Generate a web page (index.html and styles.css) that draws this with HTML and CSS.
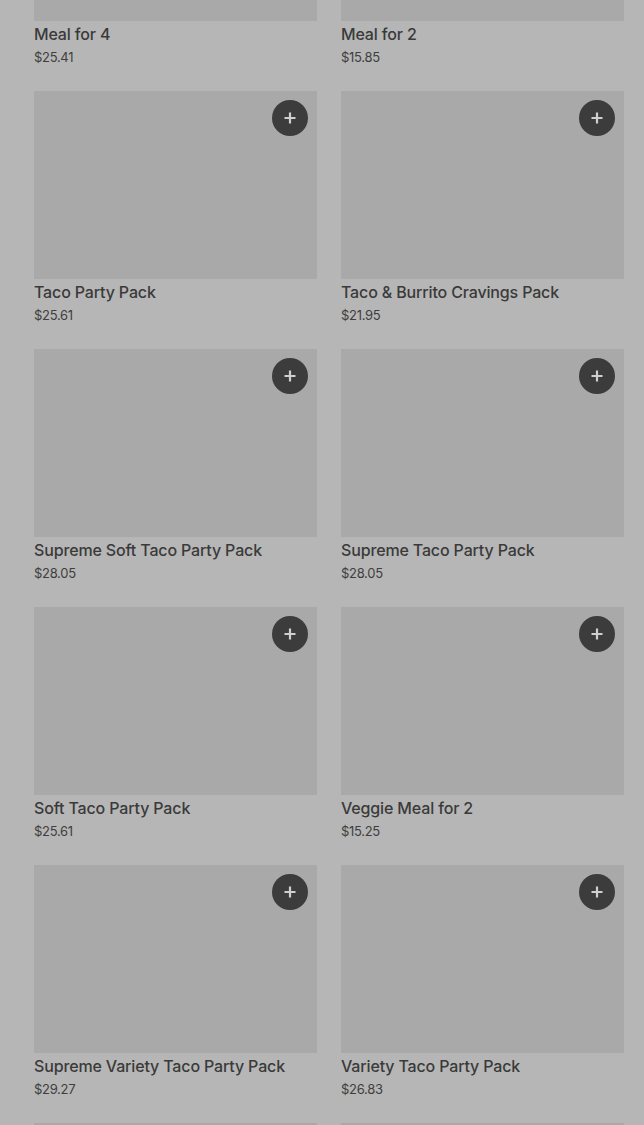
FILE: index.html
```html
<!DOCTYPE html>
<html>
<head>
<meta charset="utf-8">
<link rel="stylesheet" href="styles.css">
</head>
<body>
<main class="grid">
  <div class="card"><div class="img"><button class="add"><svg viewBox="0 0 14 14"><path d="M7 1.5v11M1.5 7h11"/></svg></button></div><div class="title">Meal for 4</div><div class="price">$25.41</div></div>
  <div class="card"><div class="img"><button class="add"><svg viewBox="0 0 14 14"><path d="M7 1.5v11M1.5 7h11"/></svg></button></div><div class="title">Meal for 2</div><div class="price">$15.85</div></div>
  <div class="card"><div class="img"><button class="add"><svg viewBox="0 0 14 14"><path d="M7 1.5v11M1.5 7h11"/></svg></button></div><div class="title">Taco Party Pack</div><div class="price">$25.61</div></div>
  <div class="card"><div class="img"><button class="add"><svg viewBox="0 0 14 14"><path d="M7 1.5v11M1.5 7h11"/></svg></button></div><div class="title">Taco &amp; Burrito Cravings Pack</div><div class="price">$21.95</div></div>
  <div class="card"><div class="img"><button class="add"><svg viewBox="0 0 14 14"><path d="M7 1.5v11M1.5 7h11"/></svg></button></div><div class="title">Supreme Soft Taco Party Pack</div><div class="price">$28.05</div></div>
  <div class="card"><div class="img"><button class="add"><svg viewBox="0 0 14 14"><path d="M7 1.5v11M1.5 7h11"/></svg></button></div><div class="title">Supreme Taco Party Pack</div><div class="price">$28.05</div></div>
  <div class="card"><div class="img"><button class="add"><svg viewBox="0 0 14 14"><path d="M7 1.5v11M1.5 7h11"/></svg></button></div><div class="title">Soft Taco Party Pack</div><div class="price">$25.61</div></div>
  <div class="card"><div class="img"><button class="add"><svg viewBox="0 0 14 14"><path d="M7 1.5v11M1.5 7h11"/></svg></button></div><div class="title">Veggie Meal for 2</div><div class="price">$15.25</div></div>
  <div class="card"><div class="img"><button class="add"><svg viewBox="0 0 14 14"><path d="M7 1.5v11M1.5 7h11"/></svg></button></div><div class="title">Supreme Variety Taco Party Pack</div><div class="price">$29.27</div></div>
  <div class="card"><div class="img"><button class="add"><svg viewBox="0 0 14 14"><path d="M7 1.5v11M1.5 7h11"/></svg></button></div><div class="title">Variety Taco Party Pack</div><div class="price">$26.83</div></div>
  <div class="card"><div class="img"></div></div>
  <div class="card"><div class="img"></div></div>
</main>
</body>
</html>
```
FILE: styles.css
```css
html, body {
  margin: 0;
  padding: 0;
  background: #b6b6b6;
  overflow: hidden;
  height: 1125px;
}
.grid {
  display: grid;
  grid-template-columns: 283px 283px;
  column-gap: 24px;
  row-gap: 23px;
  padding: 0 20px 0 34px;
  margin-top: -167px;
  font-family: "Inter", "Noto Sans", sans-serif;
}
.card {
  display: flex;
  flex-direction: column;
}
.img {
  position: relative;
  height: 188px;
  background: #a9a9a9;
}
.add {
  position: absolute;
  top: 9px;
  right: 9px;
  width: 36px;
  height: 36px;
  border-radius: 50%;
  border: none;
  padding: 0;
  background: #3c3c3c;
  display: flex;
  align-items: center;
  justify-content: center;
}
.add svg {
  width: 14px;
  height: 14px;
  stroke: #cfcfcf;
  stroke-width: 2.2;
  fill: none;
}
.title {
  margin-top: 1px;
  font-size: 16px;
  line-height: 24px;
  font-weight: 500;
  color: #3a3a3a;
  letter-spacing: -0.15px;
}
.price {
  font-size: 13px;
  line-height: 22px;
  color: #3e3e3e;
  letter-spacing: -0.3px;
}
```
